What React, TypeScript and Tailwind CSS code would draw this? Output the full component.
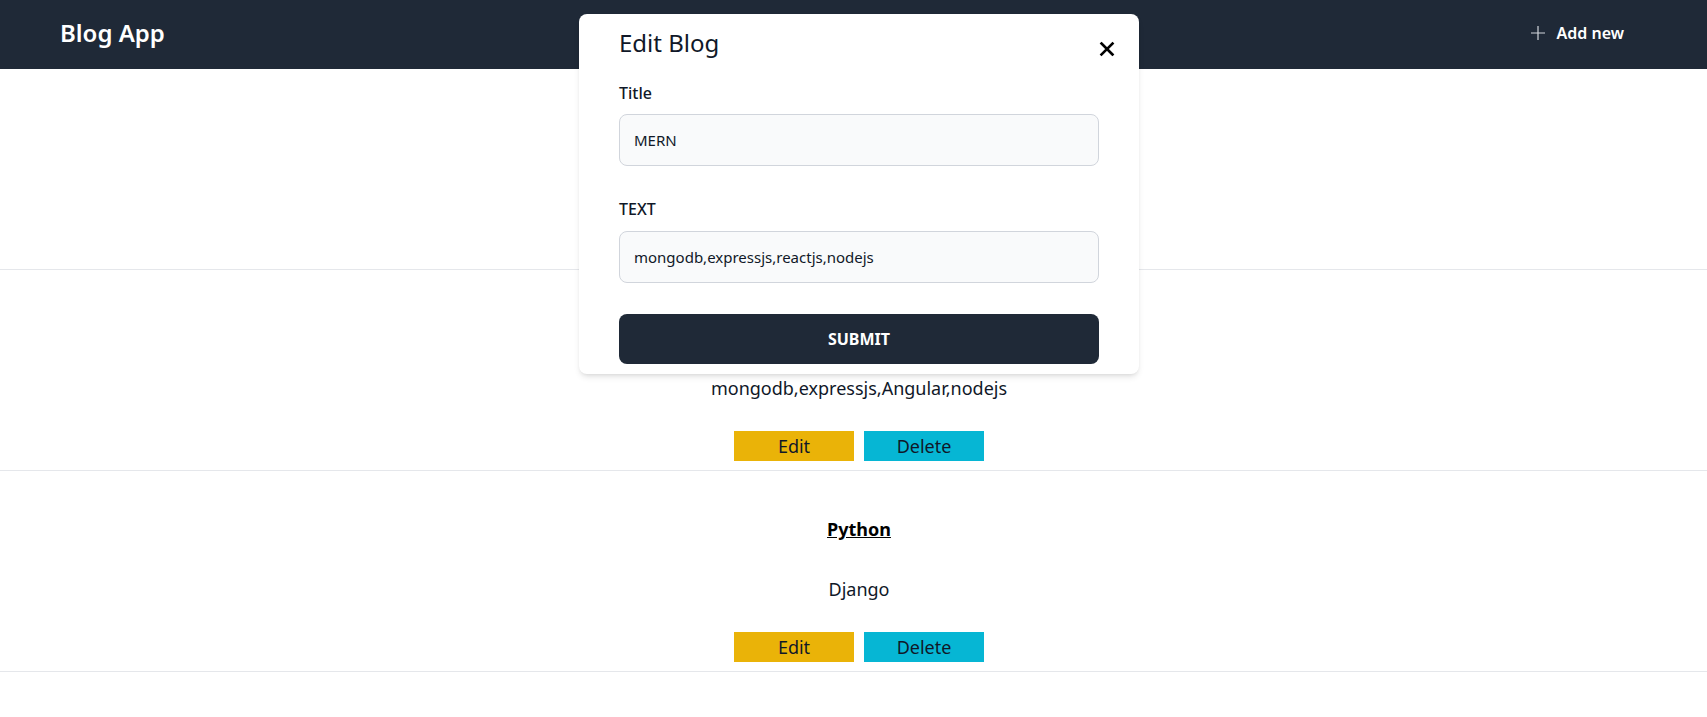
import { useState } from 'react'

interface Blog {
  id: number
  title: string
  text: string
}

const blogs: Blog[] = [
  { id: 1, title: 'MERN', text: 'mongodb,expressjs,reactjs,nodejs' },
  { id: 2, title: 'MEAN', text: 'mongodb,expressjs,Angular,nodejs' },
  { id: 3, title: 'Python', text: 'Django' },
]

function PlusIcon() {
  return (
    <svg width="14" height="14" viewBox="0 0 14 14" fill="none" stroke="#d1d5db" strokeWidth="1.2">
      <path d="M7 0v14M0 7h14" />
    </svg>
  )
}

function CloseIcon() {
  return (
    <svg width="16" height="16" viewBox="0 0 16 16" fill="none" stroke="#000" strokeWidth="2.6" strokeLinecap="square">
      <path d="M2.5 2.5l11 11M13.5 2.5l-11 11" />
    </svg>
  )
}

function BlogCard({ blog }: { blog: Blog }) {
  return (
    <div className="border-b border-gray-200">
      <div className="flex flex-col items-center pl-[11px] pt-[44px] pb-[9px]">
        <h3 className="text-lg leading-7 font-bold underline text-black">{blog.title}</h3>
        <p className="mt-8 text-lg leading-7 text-gray-900">{blog.text}</p>
        <div className="mt-[29px] flex gap-[10px]">
          <button className="w-[120px] h-[30px] bg-[#eab308] text-lg leading-none text-gray-900">Edit</button>
          <button className="w-[120px] h-[30px] bg-[#06b6d4] text-lg leading-none text-gray-900">Delete</button>
        </div>
      </div>
    </div>
  )
}

function EditModal({ blog }: { blog: Blog }) {
  const [title, setTitle] = useState(blog.title)
  const [text, setText] = useState(blog.text)

  return (
    <div className="absolute top-[14px] left-[579px] w-[560px] bg-white rounded-lg shadow-md px-10 pb-[10px]">
      {/* Header */}
      <div className="flex items-start justify-between">
        <h2 className="pt-[13px] text-2xl leading-8 text-gray-900">Edit Blog</h2>
        <button className="mt-[27px] -mr-4">
          <CloseIcon />
        </button>
      </div>

      <label className="block mt-[22px] text-base leading-6 font-medium text-gray-900">Title</label>
      <input
        value={title}
        onChange={(e) => setTitle(e.target.value)}
        className="mt-[9px] w-full h-[52px] px-[14px] rounded-lg border border-gray-300 bg-gray-50 text-[15px] text-gray-900 outline-none"
      />

      <label className="block mt-[31px] text-base leading-6 font-medium text-gray-900">TEXT</label>
      <input
        value={text}
        onChange={(e) => setText(e.target.value)}
        className="mt-[10px] w-full h-[52px] px-[14px] rounded-lg border border-gray-300 bg-gray-50 text-[15px] text-gray-900 outline-none"
      />

      <button className="mt-[31px] w-full h-[50px] rounded-lg bg-[#1f2937] text-white font-bold text-base">
        SUBMIT
      </button>
    </div>
  )
}

export default function App() {
  return (
    <div className="relative min-h-screen bg-white font-['Noto_Sans',sans-serif]">
      {/* Navbar */}
      <nav className="h-[69px] bg-[#1f2937] flex items-center justify-between pl-[60px] pr-[83px] pb-[3px]">
        <span className="text-2xl font-semibold text-white">Blog App</span>
        <button className="flex items-center gap-3 text-white font-semibold text-base">
          <PlusIcon />
          Add new
        </button>
      </nav>

      {blogs.map((blog) => (
        <BlogCard key={blog.id} blog={blog} />
      ))}

      <EditModal blog={blogs[0]} />
    </div>
  )
}
